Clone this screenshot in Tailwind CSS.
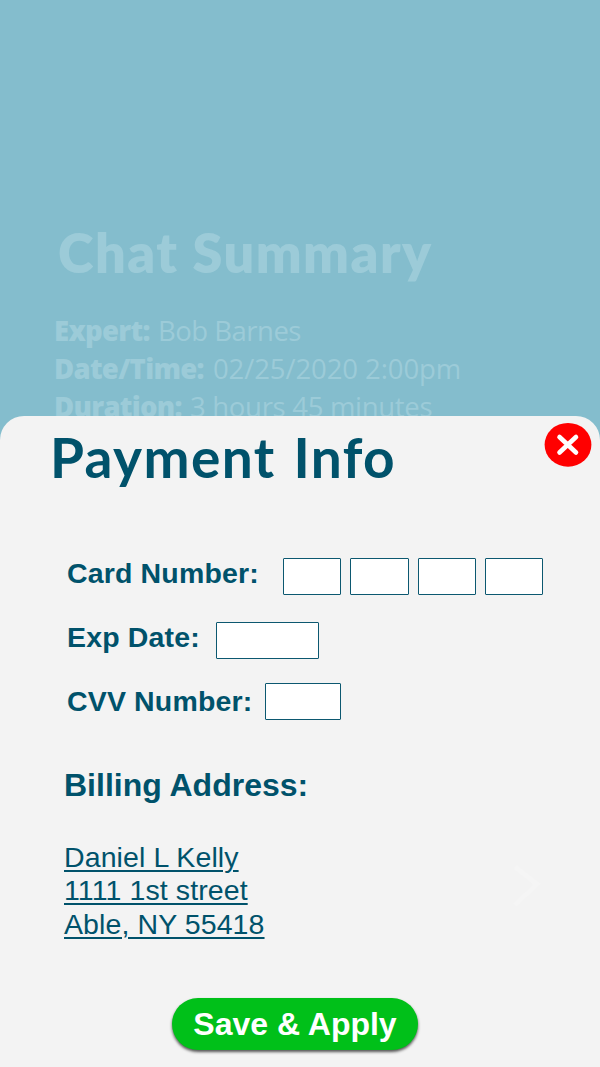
<!DOCTYPE html>
<html lang="en">
<head>
<meta charset="utf-8">
<title>Payment Info</title>
<script src="https://cdn.jsdelivr.net/npm/@tailwindcss/browser@4"></script>
</head>
<body class="h-[1067px] w-[600px] overflow-hidden bg-[#84bdcd] font-['Liberation_Sans',Arial,sans-serif] text-[#00526b]">
<div class="flex h-[1067px] flex-col overflow-hidden">
  <section class="h-[416px] shrink-0 overflow-hidden pt-[217px] pl-[54px] font-['Open_Sans',sans-serif] whitespace-nowrap text-[#9ccbd8]">
    <h1 class="h-[94.5px] pl-[4px] font-['Lato',sans-serif] text-[54px] leading-[71px] font-extrabold tracking-[1.5px]">Chat Summary</h1>
    <p class="flex h-[38.3px] text-[27.500px] leading-[38px]"><b class="w-[104px] font-extrabold tracking-[-0.7px]">Expert:</b><span class="tracking-[-0.5px]">Bob Barnes</span></p>
    <p class="flex h-[38.3px] text-[27.500px] leading-[38px]"><b class="w-[159px] font-extrabold tracking-[-0.7px]">Date/Time:</b><span class="tracking-[-0.1px]">02/25/2020 2:00pm</span></p>
    <p class="flex h-[38.3px] text-[27.500px] leading-[38px]"><b class="w-[136px] font-extrabold tracking-[-0.7px]">Duration:</b><span class="tracking-[-0.3px]">3 hours 45 minutes</span></p>
  </section>
  <main class="relative -mb-px h-[652px] shrink-0">
    <div class="flex h-full flex-col rounded-t-[24px] bg-[#f3f3f3]">
      <header class="flex h-[142px] items-start justify-between pr-[8px] pl-[50px]">
        <h2 class="pt-[5px] font-['Lato',sans-serif] text-[55px] leading-[72px] font-bold tracking-[1.4px] whitespace-nowrap [word-spacing:3px]">Payment Info</h2>
        <button class="mt-[6px]" aria-label="Close">
          <svg class="block h-[46px] w-[48px]" viewBox="0 0 48 46"><ellipse cx="24" cy="22.8" rx="23.4" ry="21.9" fill="#f00"/><path d="M15.5 15 L32 30.500 M32 15 L15.500 30.500" stroke="#fff" stroke-width="4.600" stroke-linecap="round"/></svg>
        </button>
      </header>
      <form class="flex flex-col pl-[67px] text-[28.500px] font-bold tracking-[0.15px] whitespace-nowrap">
        <div class="flex h-[64px]"><label class="w-[216px] leading-[30px]">Card Number:</label>
          <div class="flex gap-[9px]"><span class="h-[37px] w-[58.3px] rounded-[1px] border border-[#0c5870] bg-white"></span><span class="h-[37px] w-[58.3px] rounded-[1px] border border-[#0c5870] bg-white"></span><span class="h-[37px] w-[58.3px] rounded-[1px] border border-[#0c5870] bg-white"></span><span class="h-[37px] w-[58.3px] rounded-[1px] border border-[#0c5870] bg-white"></span></div>
        </div>
        <div class="flex h-[61px]"><label class="w-[149px] leading-[30px]">Exp Date:</label><span class="h-[37px] w-[103px] rounded-[1px] border border-[#0c5870] bg-white"></span></div>
        <div class="flex h-[84px]"><label class="w-[198px] pt-[3px] leading-[30px]">CVV Number:</label><span class="h-[37px] w-[76px] rounded-[1px] border border-[#0c5870] bg-white"></span></div>
      </form>
      <section class="flex h-[231px] pl-[64px]">
        <div class="w-[449px]">
          <h3 class="h-[73.5px] text-[32px] leading-[37px] font-bold">Billing Address:</h3>
          <address class="text-[28.500px] leading-[33.5px] tracking-[0.1px] whitespace-nowrap not-italic underline decoration-2 underline-offset-[3px]">Daniel L Kelly<br>1111 1st street<br>Able, NY 55418</address>
        </div>
        <svg class="mt-[97px] h-[46px] w-[28px]" viewBox="0 0 28 46" fill="none"><path d="M2 3 L24 20 L2 41" stroke="#f5f5f5" stroke-width="5"/></svg>
      </section>
      <footer class="pl-[172px]">
        <button class="block h-[52px] w-[246px] rounded-full bg-[#00c019] text-[32px] leading-[52px] font-bold whitespace-nowrap text-white shadow-[0_2px_3px_rgba(0,0,0,0.65)]">Save &amp; Apply</button>
      </footer>
    </div>
  </main>
</div>
</body>
</html>
